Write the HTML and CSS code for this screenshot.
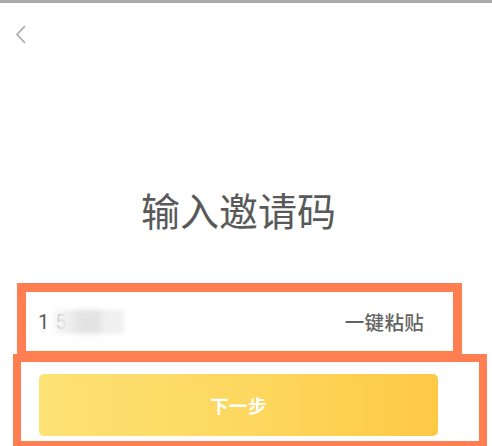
FILE: index.html
```html
<!DOCTYPE html>
<html lang="zh-CN">
<head>
<meta charset="utf-8">
<title>输入邀请码</title>
<link rel="stylesheet" href="styles.css">
</head>
<body>
<div class="page">
  <div class="statusbar"></div>
  <header class="header">
    <svg class="back" width="11" height="19" viewBox="0 0 11 19" aria-label="返回">
      <path d="M9.5 1.5 L2 9.5 L9.5 17.5" fill="none" stroke="#a6a6a6" stroke-width="1.6" stroke-linecap="round" stroke-linejoin="round"/>
    </svg>
  </header>
  <h1 class="title">输入邀请码</h1>
  <div class="input-row">
    <div class="code">
      <span class="digits">15</span>
      <span class="mask"></span>
    </div>
    <span class="paste">一键粘贴</span>
  </div>
  <div class="btn-wrap">
    <button class="next">下一步</button>
  </div>
  <div class="mark mark-input"></div>
  <div class="mark mark-button"></div>
</div>
</body>
</html>
```

FILE: styles.css
```css
html, body {
  margin: 0;
  padding: 0;
  background: #ffffff;
  overflow: hidden;
}
body {
  font-family: "Noto Sans CJK SC", "Noto Sans", Roboto, sans-serif;
  width: 492px;
  height: 446px;
}
.page {
  position: relative;
  width: 492px;
  height: 446px;
  overflow: hidden;
}
.statusbar {
  height: 3px;
  background: #a9a9a9;
}
.header {
  height: 184px;
  box-sizing: border-box;
  padding: 22px 0 0 15px;
}
.back {
  display: block;
}
.title {
  margin: 0 0 0 39px;
  width: 399px;
  text-align: center;
  font-size: 39px;
  line-height: 44px;
  font-weight: 400;
  color: #595959;
}
.input-row {
  margin: 61px 0 0 26px;
  width: 427px;
  height: 59px;
  box-sizing: border-box;
  padding: 0 29px 0 12px;
  display: flex;
  align-items: center;
  justify-content: space-between;
}
.code {
  display: flex;
  align-items: center;
}
.digits {
  font-family: Roboto, "Noto Sans", sans-serif;
  font-size: 20px;
  letter-spacing: 6px;
  color: #5a5a5a;
}
.mask {
  width: 70px;
  height: 24px;
  margin-left: -18px;
  background: linear-gradient(90deg, rgba(245,245,245,0.75) 0%, #eeeeee 22%, #e3e3e3 40%, #e3e3e3 62%, #efefef 72%, #f1f1f1 100%);
  filter: blur(2px);
}
.paste {
  font-size: 19.5px;
  font-weight: 500;
  color: #646464;
  letter-spacing: 0.3px;
}
.btn-wrap {
  margin: 23px 0 0 39px;
  width: 399px;
}
.next {
  display: block;
  width: 100%;
  height: 62px;
  border: 0;
  border-radius: 5px;
  background: linear-gradient(90deg, #fde274 0%, #fdd860 50%, #fec945 100%);
  color: #ffffff;
  font-family: "Noto Sans CJK SC", sans-serif;
  font-size: 18.5px;
  font-weight: 700;
  letter-spacing: 0.5px;
  padding: 0;
}
.mark {
  position: absolute;
  box-sizing: border-box;
  border-style: solid;
  border-color: #ff7e52;
}
.mark-input {
  left: 17px;
  top: 283px;
  width: 445px;
  height: 77px;
  border-width: 9px;
}
.mark-button {
  left: 13px;
  top: 354px;
  width: 474px;
  height: 95px;
  border-width: 8px;
}
```
